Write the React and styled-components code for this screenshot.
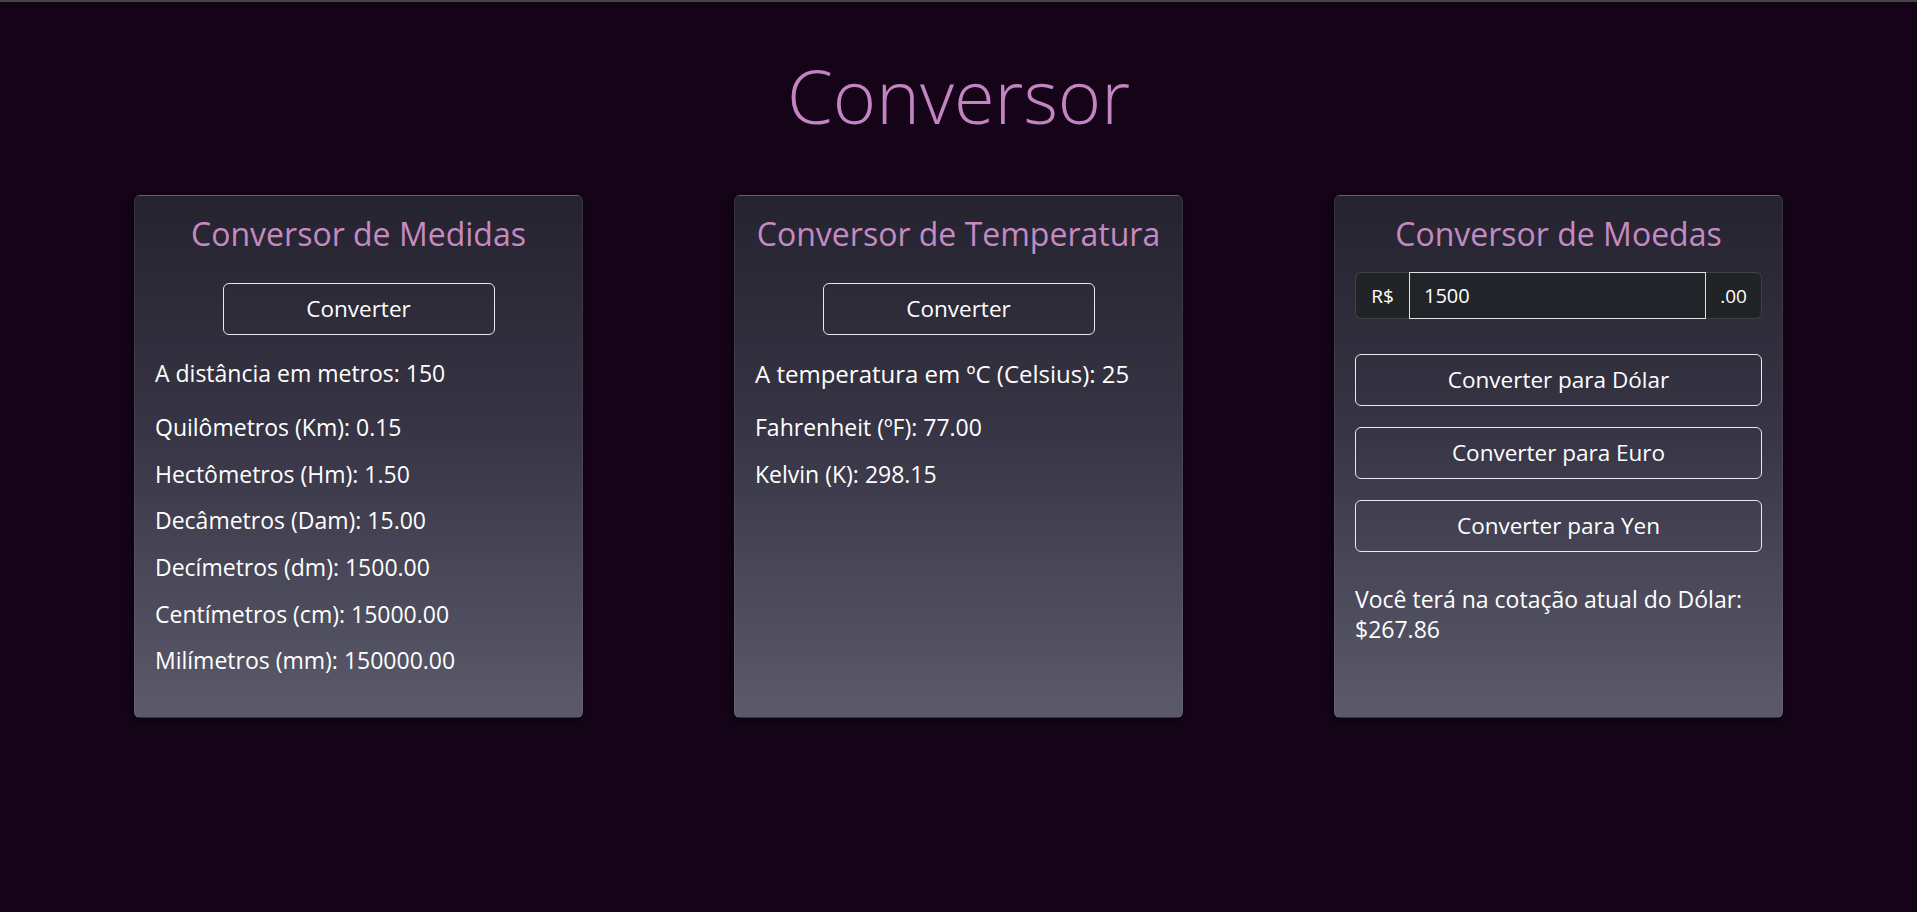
import React from "react";
import styled, { createGlobalStyle } from "styled-components";

const GlobalStyle = createGlobalStyle`
    html, body {
        margin: 0;
        padding: 0;
        background: #150318;
    }

    body {
        min-height: 100vh;
        border-top: 2px solid #454545;
        box-sizing: border-box;
        font-family: "Open Sans", sans-serif;
        color: #ffffff;
    }
`;

const medidas = [
    ["Quilômetros (Km)", "0.15"],
    ["Hectômetros (Hm)", "1.50"],
    ["Decâmetros (Dam)", "15.00"],
    ["Decímetros (dm)", "1500.00"],
    ["Centímetros (cm)", "15000.00"],
    ["Milímetros (mm)", "150000.00"],
];

const temperaturas = [
    ["Fahrenheit (ºF)", "77.00"],
    ["Kelvin (K)", "298.15"],
];

function App() {
    return (
        <Page>
            <GlobalStyle />
            <Title>Conversor</Title>

            <Cards>
                <Card>
                    <CardTitle>Conversor de Medidas</CardTitle>
                    <ConvertButton>Converter</ConvertButton>
                    <Lead>A distância em metros: 150</Lead>
                    {medidas.map(([label, value]) => (
                        <Line key={label}>{label}: {value}</Line>
                    ))}
                </Card>

                <Card>
                    <CardTitle>Conversor de Temperatura</CardTitle>
                    <ConvertButton>Converter</ConvertButton>
                    <Lead system>A temperatura em ºC (Celsius): 25</Lead>
                    {temperaturas.map(([label, value]) => (
                        <Line key={label}>{label}: {value}</Line>
                    ))}
                </Card>

                <Card>
                    <CardTitle>Conversor de Moedas</CardTitle>
                    <InputGroup>
                        <Addon side="left">R$</Addon>
                        <MoneyInput defaultValue="1500" />
                        <Addon side="right">.00</Addon>
                    </InputGroup>

                    <ButtonStack>
                        <WideButton>Converter para Dólar</WideButton>
                        <WideButton>Converter para Euro</WideButton>
                        <WideButton>Converter para Yen</WideButton>
                    </ButtonStack>

                    <Result>
                        Você terá na cotação atual do Dólar:
                        <br />
                        $267.86
                    </Result>
                </Card>
            </Cards>
        </Page>
    );
}

const Page = styled.div`
    display: flex;
    flex-direction: column;
    align-items: center;
`;

const Title = styled.h1`
    margin: 51px 0 0;
    font-family: "Open Sans", sans-serif;
    font-weight: 300;
    font-size: 74px;
    line-height: 86px;
    color: #c384c1;
`;

const Cards = styled.div`
    display: flex;
    justify-content: center;
    gap: 151px;
    margin-top: 56px;
    width: 100%;
`;

const Card = styled.div`
    box-sizing: border-box;
    width: 449px;
    height: 523px;
    padding: 19px 20px 20px;
    display: flex;
    flex-direction: column;
    border: 1px solid rgba(255, 255, 255, 0.07);
    border-radius: 6px;
    background: linear-gradient(180deg, #25232e 0%, #373545 45%, #5b5a6b 100%);
    box-shadow: -2px 2px 5px rgba(0, 0, 0, 0.45);
`;

const CardTitle = styled.h2`
    margin: 0 0 30px;
    text-align: center;
    font-family: "Open Sans", sans-serif;
    font-weight: 400;
    font-size: 32px;
    line-height: 38px;
    color: #c58ac3;
    white-space: nowrap;
`;

const buttonBase = `
    box-sizing: border-box;
    border: 1px solid #e8e8ee;
    border-radius: 6px;
    background: transparent;
    color: #ffffff;
    font-family: "Open Sans", sans-serif;
    font-size: 22.5px;
    line-height: 1.4;
    cursor: pointer;
`;

const ConvertButton = styled.button`
    ${buttonBase}
    align-self: center;
    width: 272px;
    height: 52px;
    padding: 8px 16px;
`;

const Lead = styled.p`
    margin: 22px 0 21px;
    font-family: "Open Sans", sans-serif;
    font-size: ${(p) => (p.system ? "24px" : "23px")};
    line-height: 33px;
    white-space: nowrap;
`;

const Line = styled.p`
    margin: 0 0 13.7px;
    font-size: 23px;
    line-height: 33px;
    white-space: nowrap;
`;

const InputGroup = styled.div`
    display: flex;
    height: 47px;
    margin-top: -11px;
`;

const Addon = styled.span`
    display: flex;
    align-items: center;
    justify-content: center;
    width: ${(p) => (p.side === "left" ? "54px" : "56px")};
    box-sizing: border-box;
    background: #212327;
    border: 1px solid #3e4247;
    border-${(p) => (p.side === "left" ? "right" : "left")}: none;
    border-radius: ${(p) => (p.side === "left" ? "6px 0 0 6px" : "0 6px 6px 0")};
    font-size: 19px;
    color: #ffffff;
`;

const MoneyInput = styled.input`
    flex: 1;
    min-width: 0;
    box-sizing: border-box;
    height: 47px;
    padding: 0 14px;
    background: #212529;
    border: 1px solid #dee2e6;
    color: #ffffff;
    font-family: "Open Sans", sans-serif;
    font-size: 20px;
    outline: none;
`;

const ButtonStack = styled.div`
    display: flex;
    flex-direction: column;
    gap: 21px;
    margin-top: 35px;
`;

const WideButton = styled.button`
    ${buttonBase}
    width: 100%;
    height: 52px;
    padding: 8px 16px;
`;

const Result = styled.p`
    margin: 32px 0 0;
    font-size: 23px;
    line-height: 30px;
`;

export default App;
